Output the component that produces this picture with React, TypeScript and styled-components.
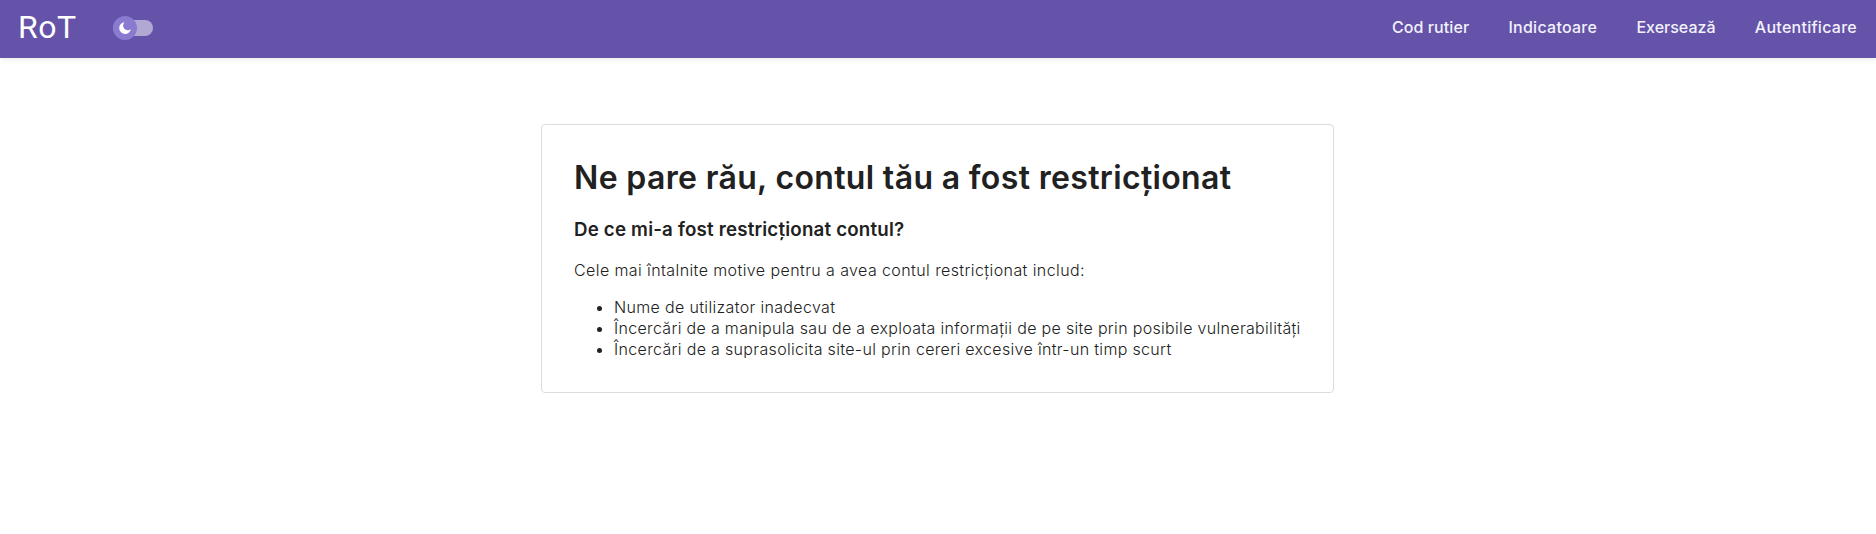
import React from "react";
import styled, { createGlobalStyle } from "styled-components";

const Base = createGlobalStyle`
  *, *::before, *::after { box-sizing: border-box; }
  body {
    margin: 0;
    background: #fff;
    color: #212121;
    font-family: Inter, "Liberation Sans", sans-serif;
  }
`;

const Header = styled.header`
  display: flex;
  align-items: center;
  justify-content: space-between;
  height: 58px;
  padding: 0 19px 0 18px;
  background: #6453a9;
  color: #fff;
  box-shadow: 0 2px 4px rgba(0, 0, 0, 0.07);
`;

const Brand = styled.div`
  display: flex;
  align-items: center;
  gap: 36px;
  padding-bottom: 2px;
`;

const Logo = styled.a`
  width: 59px;
  padding-bottom: 2px;
  font: 400 32px/40px Roboto, sans-serif;
  letter-spacing: 0.5px;
  white-space: nowrap;
`;

const Track = styled.button`
  display: flex;
  align-items: center;
  width: 40px;
  height: 16px;
  padding: 0;
  border: 0;
  border-radius: 8px;
  background: #b1a9d4;
`;

const Thumb = styled.span`
  display: flex;
  align-items: center;
  justify-content: center;
  flex: none;
  width: 24px;
  height: 24px;
  border-radius: 50%;
  background: #8a7bd0;
`;

const Nav = styled.nav`
  display: flex;
  gap: 39.3px;
  padding-bottom: 4px;
`;

const NavLink = styled.a<{ $tracking: number }>`
  font-size: 16px;
  font-weight: 500;
  line-height: 20px;
  letter-spacing: ${(p) => p.$tracking}px;
  color: #f3f1fa;
`;

const Main = styled.main`
  display: flex;
  justify-content: center;
  padding: 66px 1px 0 0;
`;

const Card = styled.section`
  width: 793px;
  height: 269px;
  padding: 33px 32px;
  border: 1px solid #dcdcdc;
  border-radius: 4px;
  white-space: nowrap;
`;

const Title = styled.h1`
  margin: 0 0 20px;
  font-size: 32px;
  font-weight: 600;
  line-height: 40px;
  letter-spacing: 0.346px;
`;

const Subtitle = styled.h2`
  margin: 0 0 18px;
  font-size: 18.72px;
  font-weight: 600;
  line-height: 24px;
  letter-spacing: 0.193px;
`;

const Text = styled.p`
  margin: 0 0 16px;
  font-size: 16px;
  font-weight: 300;
  line-height: 21px;
  letter-spacing: 0.407px;
`;

const Reasons = styled.ul`
  margin: 0;
  padding-left: 40px;
  font-size: 16px;
  font-weight: 300;
  line-height: 21px;
`;

const Reason = styled.li<{ $tracking: number }>`
  letter-spacing: ${(p) => p.$tracking}px;
`;

const links = [
  { label: "Cod rutier", tracking: 0.084 },
  { label: "Indicatoare", tracking: 0.254 },
  { label: "Exersează", tracking: 0 },
  { label: "Autentificare", tracking: 0.27 },
];

const reasons = [
  { text: "Nume de utilizator inadecvat", tracking: 0.34 },
  {
    text: "Încercări de a manipula sau de a exploata informații de pe site prin posibile vulnerabilități",
    tracking: 0.32,
  },
  {
    text: "Încercări de a suprasolicita site-ul prin cereri excesive într-un timp scurt",
    tracking: 0.332,
  },
];

function MoonIcon() {
  return (
    <svg width="12" height="12" viewBox="0 0 12 12" fill="#fff">
      <path d="M5.6 0.2A5.9 5.9 0 1 0 11.9 7A3.9 3.9 0 0 1 5.6 0.2Z" />
    </svg>
  );
}

export default function App() {
  return (
    <>
      <Base />
      <Header>
        <Brand>
          <Logo>RoT</Logo>
          <Track type="button" aria-label="Mod întunecat">
            <Thumb>
              <MoonIcon />
            </Thumb>
          </Track>
        </Brand>
        <Nav>
          {links.map((l) => (
            <NavLink key={l.label} $tracking={l.tracking}>
              {l.label}
            </NavLink>
          ))}
        </Nav>
      </Header>
      <Main>
        <Card>
          <Title>Ne pare rău, contul tău a fost restricționat</Title>
          <Subtitle>De ce mi-a fost restricționat contul?</Subtitle>
          <Text>Cele mai întalnite motive pentru a avea contul restricționat includ:</Text>
          <Reasons>
            {reasons.map((r) => (
              <Reason key={r.text} $tracking={r.tracking}>
                {r.text}
              </Reason>
            ))}
          </Reasons>
        </Card>
      </Main>
    </>
  );
}
